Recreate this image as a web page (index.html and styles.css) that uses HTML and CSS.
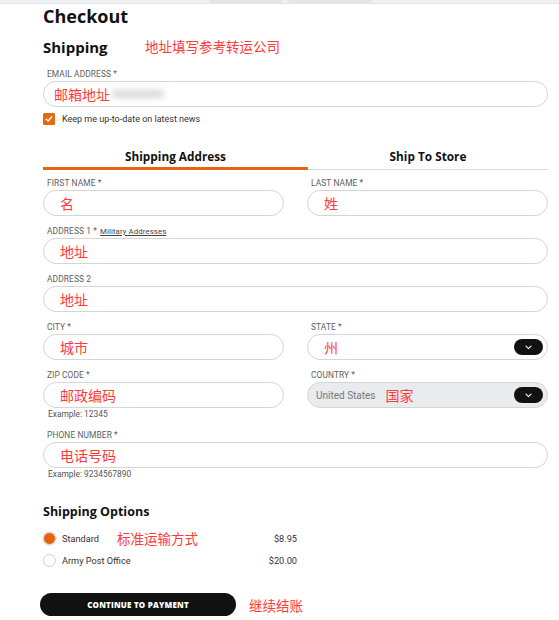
FILE: index.html
```html
<!DOCTYPE html>
<html lang="en">
<head>
<meta charset="utf-8">
<title>Checkout</title>
<link rel="stylesheet" href="styles.css">
</head>
<body>
<div class="topbar"><span class="tb-tab tb-a"></span><span class="tb-tab tb-b"></span></div>
<main class="page">
  <h1 class="title">Checkout</h1>
  <div class="section-head">
    <h2 class="subtitle">Shipping</h2>
    <span class="note note-head">地址填写参考转运公司</span>
  </div>

  <div class="field email-field">
    <div class="label">EMAIL ADDRESS *</div>
    <div class="input"><span class="note">邮箱地址</span><span class="blur"></span></div>
  </div>
  <div class="check-row">
    <span class="checkbox"><svg width="8" height="8" viewBox="0 0 8 8"><path d="M1.2 4.2 L3.2 6 L6.8 1.8" fill="none" stroke="#fff" stroke-width="1.4" stroke-linecap="round" stroke-linejoin="round"/></svg></span>
    <span class="check-text">Keep me up-to-date on latest news</span>
  </div>

  <div class="tabs">
    <div class="tab active">Shipping Address</div>
    <div class="tab">Ship To Store</div>
  </div>

  <div class="grid">
    <div class="field">
      <div class="label">FIRST NAME *</div>
      <div class="input"><span class="note">名</span></div>
    </div>
    <div class="field">
      <div class="label">LAST NAME *</div>
      <div class="input"><span class="note">姓</span></div>
    </div>
    <div class="field wide">
      <div class="label">ADDRESS 1 * <a class="link" href="#">Military Addresses</a></div>
      <div class="input"><span class="note">地址</span></div>
    </div>
    <div class="field wide">
      <div class="label">ADDRESS 2</div>
      <div class="input"><span class="note">地址</span></div>
    </div>
    <div class="field">
      <div class="label">CITY *</div>
      <div class="input"><span class="note">城市</span></div>
    </div>
    <div class="field">
      <div class="label">STATE *</div>
      <div class="input select"><span class="note">州</span><span class="sel-btn"><svg width="7" height="5" viewBox="0 0 7 5"><path d="M1 1.2 L3.5 3.6 L6 1.2" fill="none" stroke="#fff" stroke-width="1.1" stroke-linecap="round" stroke-linejoin="round"/></svg></span></div>
    </div>
    <div class="field">
      <div class="label">ZIP CODE *</div>
      <div class="input"><span class="note">邮政编码</span></div>
      <div class="hint">Example: 12345</div>
    </div>
    <div class="field">
      <div class="label">COUNTRY *</div>
      <div class="input select disabled"><span class="value">United States</span><span class="note note-country">国家</span><span class="sel-btn"><svg width="7" height="5" viewBox="0 0 7 5"><path d="M1 1.2 L3.5 3.6 L6 1.2" fill="none" stroke="#fff" stroke-width="1.1" stroke-linecap="round" stroke-linejoin="round"/></svg></span></div>
    </div>
    <div class="field wide">
      <div class="label">PHONE NUMBER *</div>
      <div class="input"><span class="note">电话号码</span></div>
      <div class="hint">Example: 9234567890</div>
    </div>
  </div>

  <h3 class="options-title">Shipping Options</h3>
  <div class="options">
    <div class="option">
      <span class="radio checked"></span>
      <span class="opt-name">Standard</span>
      <span class="note note-opt">标准运输方式</span>
      <span class="price">$8.95</span>
    </div>
    <div class="option">
      <span class="radio"></span>
      <span class="opt-name">Army Post Office</span>
      <span class="price">$20.00</span>
    </div>
  </div>

  <div class="actions">
    <button class="btn" type="button">CONTINUE TO PAYMENT</button>
    <span class="note note-btn">继续结账</span>
  </div>
</main>
</body>
</html>
```

FILE: styles.css
```css
* { box-sizing: border-box; }
html, body { margin: 0; padding: 0; background: #fff; }
body { font-family: Roboto, "Liberation Sans", "Noto Sans CJK SC", sans-serif; color: #222; width: 559px; overflow: hidden; }

.topbar { height: 4px; background: #eef0f3; border-bottom: 1px solid #e0e3e8; display: flex; padding-left: 210px; gap: 6px; }
.tb-tab { height: 3px; background: #e2e5ea; border-radius: 0 0 2px 2px; }
.tb-a { width: 72px; }
.tb-b { width: 85px; }

.page { padding: 0 11px 0 43px; }

.title { font-family: "Open Sans", "Liberation Sans", sans-serif; font-weight: 700; font-size: 18px; line-height: 24px; margin: 0; color: #111; }

.section-head { display: flex; align-items: center; margin-top: 9px; height: 20px; }
.subtitle { font-family: "Open Sans", "Liberation Sans", sans-serif; font-weight: 700; font-size: 15px; line-height: 20px; margin: 0; color: #111; width: 102px; }

.note { font-family: "Noto Sans CJK SC", sans-serif; color: #ff3a3a; font-size: 14px; line-height: 18px; }
.note-head { font-size: 13.5px; margin-top: -3px; }

.field { margin-bottom: 8px; }
.email-field { margin-top: 10px; margin-bottom: 0; }
.label { font-size: 8.4px; line-height: 14px; color: #5e5e5e; letter-spacing: 0.1px; padding-left: 4px; height: 14px; }
.link { color: #444; text-decoration: underline; margin-left: 1px; font-size: 7.8px; }
.input { height: 26px; border: 1px solid #d5d5d5; border-radius: 13px; display: flex; align-items: center; padding-left: 16px; position: relative; background: #fff; }
.email-field .input { padding-left: 10px; }
.blur { display: inline-block; width: 52px; height: 8px; background: #d8d8d8; filter: blur(3px); margin-left: 2px; border-radius: 4px; }
.hint { font-size: 8.4px; line-height: 12px; color: #555; padding-left: 5px; height: 12px; }

.check-row { display: flex; align-items: center; margin-top: 6px; height: 12px; }
.checkbox { width: 12px; height: 12px; background: #e9680f; border-radius: 1.5px; display: flex; align-items: center; justify-content: center; }
.check-text { font-size: 9px; color: #333; margin-left: 7px; }

.tabs { display: grid; grid-template-columns: 265px 1fr; margin-top: 23px; border-bottom: 1px solid #d9d9d9; }
.tab { font-family: "Open Sans", "Liberation Sans", sans-serif; font-weight: 700; font-size: 11.8px; line-height: 17px; text-align: center; color: #111; padding-bottom: 2px; }
.tab.active { border-bottom: 3px solid #e8650f; margin-bottom: -1px; }
.tab:not(.active) { padding-bottom: 4px; }

.grid { display: grid; grid-template-columns: 241px 241px; column-gap: 23px; margin-top: 6px; }
.wide { grid-column: 1 / -1; }

.select { padding-right: 4px; }
.sel-btn { position: absolute; right: 4px; top: 4px; width: 29px; height: 16px; background: #111; border-radius: 8px; display: flex; align-items: center; justify-content: center; }
.disabled { background: #e9ebee; padding-left: 8px; }
.value { font-size: 10px; color: #777; }
.note-country { margin-left: 10px; }

.options-title { font-family: "Open Sans", "Liberation Sans", sans-serif; font-weight: 700; font-size: 12.5px; line-height: 18px; margin: 15px 0 0; color: #111; }
.options { width: 254px; margin-top: 6px; }
.option { display: flex; align-items: center; height: 22px; }
.radio { width: 13px; height: 13px; border-radius: 50%; border: 1px solid #cfcfcf; background: #fff; flex: none; }
.radio.checked { background: #e8620c; border: 1.5px solid #e9e3df; box-shadow: 0 0 0 0.5px #d8d8d8; }
.opt-name { font-size: 9.2px; color: #333; margin-left: 6px; }
.note-opt { margin-left: 18px; font-size: 13.5px; }
.price { margin-left: auto; font-size: 9.2px; color: #333; }

.actions { display: flex; align-items: center; margin-top: 22px; margin-left: -3px; }
.btn { width: 196px; height: 23px; background: #111; color: #fff; border: none; border-radius: 12px; font-family: "Open Sans", "Liberation Sans", sans-serif; font-weight: 800; font-size: 8px; letter-spacing: 0.2px; padding: 0; }
.note-btn { margin-left: 13px; font-size: 13.5px; }
```
